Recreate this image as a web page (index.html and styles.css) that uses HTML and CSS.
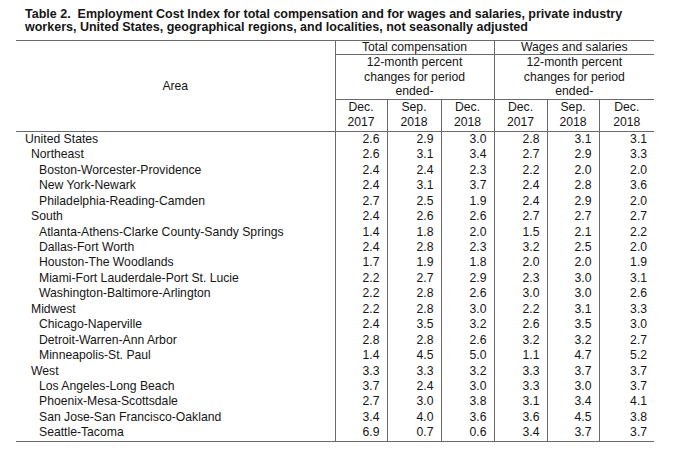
FILE: index.html
```html
<!DOCTYPE html>
<html>
<head>
<meta charset="utf-8">
<link rel="stylesheet" href="styles.css">
</head>
<body>
<div class="page">
  <h1 class="title">Table 2.&nbsp; Employment Cost Index for total compensation and for wages and salaries, private industry<br>workers, United States, geographical regions, and localities, not seasonally adjusted</h1>
  <table class="eci">
    <colgroup>
      <col class="c-area">
      <col class="c1"><col class="c2"><col class="c3"><col class="c4"><col class="c5"><col class="c6">
    </colgroup>
    <thead>
      <tr class="h1">
        <th rowspan="3" class="area-h">Area</th>
        <th colspan="3" class="grp">Total compensation</th>
        <th colspan="3" class="grp">Wages and salaries</th>
      </tr>
      <tr class="h2">
        <th colspan="3" class="grp">12-month percent<br>changes for period<br>ended-</th>
        <th colspan="3" class="grp">12-month percent<br>changes for period<br>ended-</th>
      </tr>
      <tr class="h3">
        <th class="d gl">Dec.<br>2017</th>
        <th class="d">Sep.<br>2018</th>
        <th class="d">Dec.<br>2018</th>
        <th class="d gl">Dec.<br>2017</th>
        <th class="d">Sep.<br>2018</th>
        <th class="d">Dec.<br>2018</th>
      </tr>
    </thead>
    <tbody>
      <tr><td class="a l0">United States</td><td class="gl">2.6</td><td>2.9</td><td>3.0</td><td class="gl">2.8</td><td>3.1</td><td>3.1</td></tr>
      <tr><td class="a l1">Northeast</td><td class="gl">2.6</td><td>3.1</td><td>3.4</td><td class="gl">2.7</td><td>2.9</td><td>3.3</td></tr>
      <tr><td class="a l2">Boston-Worcester-Providence</td><td class="gl">2.4</td><td>2.4</td><td>2.3</td><td class="gl">2.2</td><td>2.0</td><td>2.0</td></tr>
      <tr><td class="a l2">New York-Newark</td><td class="gl">2.4</td><td>3.1</td><td>3.7</td><td class="gl">2.4</td><td>2.8</td><td>3.6</td></tr>
      <tr><td class="a l2">Philadelphia-Reading-Camden</td><td class="gl">2.7</td><td>2.5</td><td>1.9</td><td class="gl">2.4</td><td>2.9</td><td>2.0</td></tr>
      <tr><td class="a l1">South</td><td class="gl">2.4</td><td>2.6</td><td>2.6</td><td class="gl">2.7</td><td>2.7</td><td>2.7</td></tr>
      <tr><td class="a l2">Atlanta-Athens-Clarke County-Sandy Springs</td><td class="gl">1.4</td><td>1.8</td><td>2.0</td><td class="gl">1.5</td><td>2.1</td><td>2.2</td></tr>
      <tr><td class="a l2">Dallas-Fort Worth</td><td class="gl">2.4</td><td>2.8</td><td>2.3</td><td class="gl">3.2</td><td>2.5</td><td>2.0</td></tr>
      <tr><td class="a l2">Houston-The Woodlands</td><td class="gl">1.7</td><td>1.9</td><td>1.8</td><td class="gl">2.0</td><td>2.0</td><td>1.9</td></tr>
      <tr><td class="a l2">Miami-Fort Lauderdale-Port St. Lucie</td><td class="gl">2.2</td><td>2.7</td><td>2.9</td><td class="gl">2.3</td><td>3.0</td><td>3.1</td></tr>
      <tr><td class="a l2">Washington-Baltimore-Arlington</td><td class="gl">2.2</td><td>2.8</td><td>2.6</td><td class="gl">3.0</td><td>3.0</td><td>2.6</td></tr>
      <tr><td class="a l1">Midwest</td><td class="gl">2.2</td><td>2.8</td><td>3.0</td><td class="gl">2.2</td><td>3.1</td><td>3.3</td></tr>
      <tr><td class="a l2">Chicago-Naperville</td><td class="gl">2.4</td><td>3.5</td><td>3.2</td><td class="gl">2.6</td><td>3.5</td><td>3.0</td></tr>
      <tr><td class="a l2">Detroit-Warren-Ann Arbor</td><td class="gl">2.8</td><td>2.8</td><td>2.6</td><td class="gl">3.2</td><td>3.2</td><td>2.7</td></tr>
      <tr><td class="a l2">Minneapolis-St. Paul</td><td class="gl">1.4</td><td>4.5</td><td>5.0</td><td class="gl">1.1</td><td>4.7</td><td>5.2</td></tr>
      <tr><td class="a l1">West</td><td class="gl">3.3</td><td>3.3</td><td>3.2</td><td class="gl">3.3</td><td>3.7</td><td>3.7</td></tr>
      <tr><td class="a l2">Los Angeles-Long Beach</td><td class="gl">3.7</td><td>2.4</td><td>3.0</td><td class="gl">3.3</td><td>3.0</td><td>3.7</td></tr>
      <tr><td class="a l2">Phoenix-Mesa-Scottsdale</td><td class="gl">2.7</td><td>3.0</td><td>3.8</td><td class="gl">3.1</td><td>3.4</td><td>4.1</td></tr>
      <tr><td class="a l2">San Jose-San Francisco-Oakland</td><td class="gl">3.4</td><td>4.0</td><td>3.6</td><td class="gl">3.6</td><td>4.5</td><td>3.8</td></tr>
      <tr><td class="a l2">Seattle-Tacoma</td><td class="gl">6.9</td><td>0.7</td><td>0.6</td><td class="gl">3.4</td><td>3.7</td><td>3.7</td></tr>
    </tbody>
  </table>
</div>
</body>
</html>
```
FILE: styles.css
```css
html, body {
  margin: 0;
  padding: 0;
  background: #ffffff;
}
.page {
  padding: 8px 0 0 16px;
  font-family: "Liberation Sans", Arial, sans-serif;
  color: #151515;
}
.title {
  margin: 0;
  padding-left: 9px;
  font-size: 12.5px;
  line-height: 13px;
  font-weight: bold;
  color: #151515;
  height: 32px;
}
.eci {
  border-collapse: collapse;
  table-layout: fixed;
  width: 638px;
  font-size: 12.2px;
  border-top: 1px solid #6a6a6a;
  border-bottom: 1px solid #6a6a6a;
}
.c-area { width: 319px; }
.c1 { width: 52px; }
.c2 { width: 54px; }
.c3 { width: 53px; }
.c4 { width: 53px; }
.c5 { width: 52px; }
.c6 { width: 55px; }
.eci th {
  font-weight: normal;
  text-align: center;
  padding: 0;
}
.area-h {
  border-right: 1px solid #6a6a6a;
  border-bottom: 1px solid #6a6a6a;
}
.grp {
  border-bottom: 1px solid #6a6a6a;
  border-left: 1px solid #6a6a6a;
  line-height: 14.6px;
}
.h1 .grp { height: 13px; line-height: 13px; }
.h2 .grp { height: 43px; }
.h3 th { height: 31px; line-height: 15px; border-bottom: 1px solid #6a6a6a; }
.eci .d { border-left: 1px solid #6a6a6a; }
.eci td {
  height: 15.45px;
  line-height: 15.45px;
  padding: 0 7px 0 0;
  text-align: right;
  border-left: 1px solid #6a6a6a;
  white-space: nowrap;
}
.eci td.a {
  text-align: left;
  border-left: none;
  border-right: 1px solid #6a6a6a;
  padding-right: 0;
}
.l0 { padding-left: 9px !important; }
.l1 { padding-left: 15px !important; }
.l2 { padding-left: 23px !important; }
```
